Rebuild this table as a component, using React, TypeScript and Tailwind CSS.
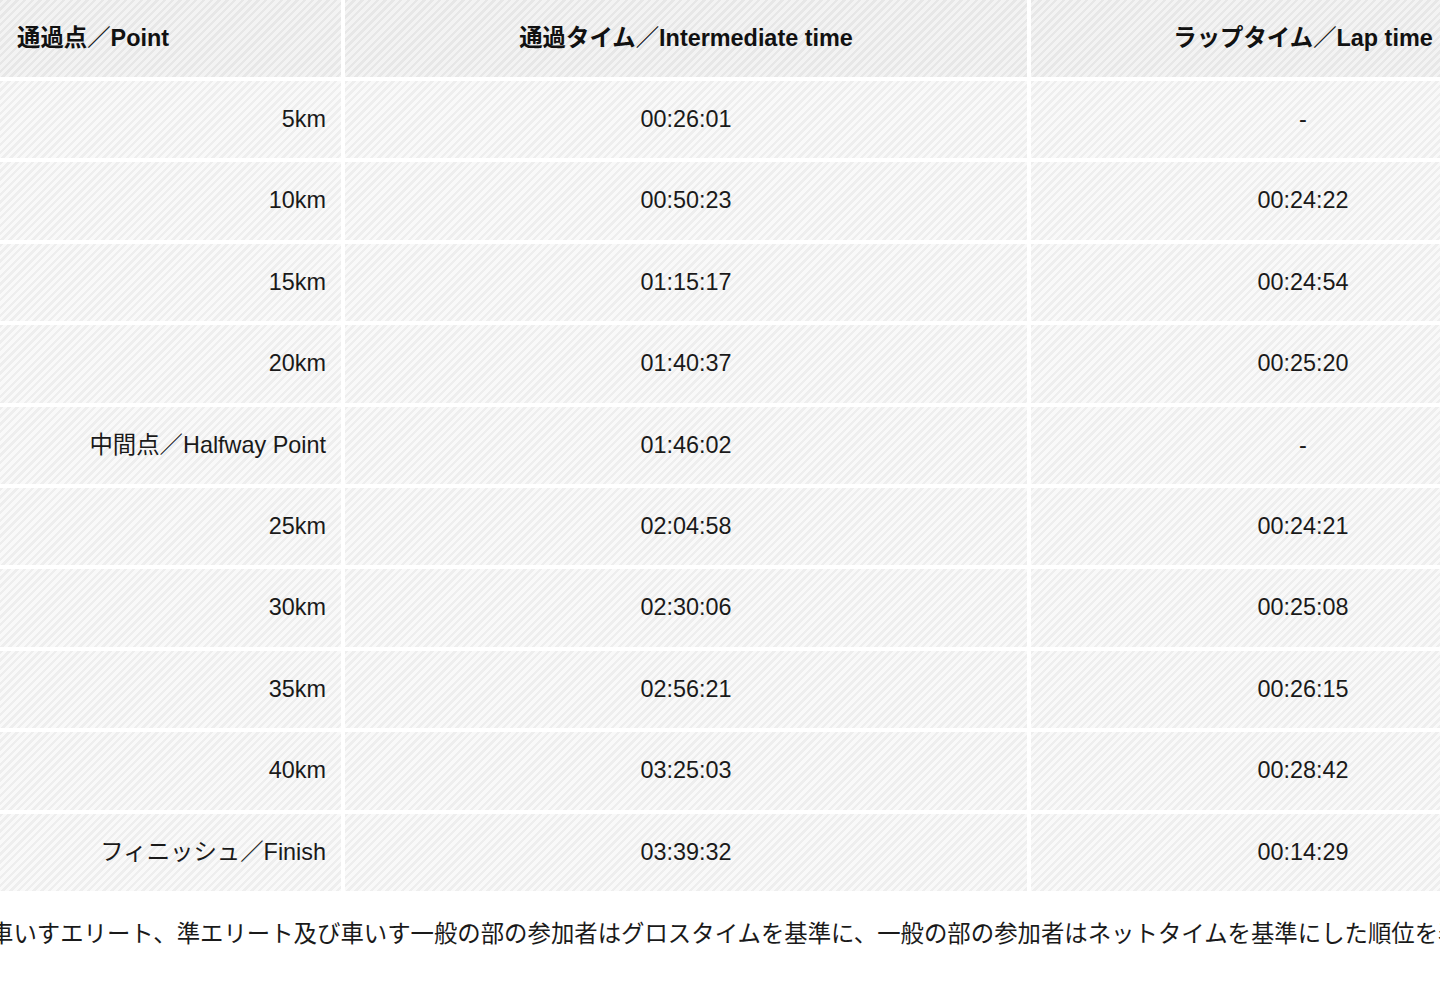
const rows = [
  { point: "5km", time: "00:26:01", lap: "-" },
  { point: "10km", time: "00:50:23", lap: "00:24:22" },
  { point: "15km", time: "01:15:17", lap: "00:24:54" },
  { point: "20km", time: "01:40:37", lap: "00:25:20" },
  { point: "中間点／Halfway Point", time: "01:46:02", lap: "-" },
  { point: "25km", time: "02:04:58", lap: "00:24:21" },
  { point: "30km", time: "02:30:06", lap: "00:25:08" },
  { point: "35km", time: "02:56:21", lap: "00:26:15" },
  { point: "40km", time: "03:25:03", lap: "00:28:42" },
  { point: "フィニッシュ／Finish", time: "03:39:32", lap: "00:14:29" },
];

const headCell =
  "h-[77px] flex items-center font-bold text-[#111] bg-[repeating-linear-gradient(135deg,#e7e7e7_0px,#e7e7e7_2.5px,#f3f3f3_2.5px,#f3f3f3_5.5px)]";
const bodyCell =
  "h-[77.4px] flex items-center text-[#1a1a1a] bg-[repeating-linear-gradient(135deg,#eeeeee_0px,#eeeeee_2.5px,#f9f9f9_2.5px,#f9f9f9_5.5px)]";

export default function App() {
  return (
    <div
      className="w-[1440px] h-[989px] overflow-hidden bg-white text-[23.4px] leading-none"
      style={{ fontFamily: '"Liberation Sans", "Noto Sans CJK JP", sans-serif' }}
    >
      {/* Split table */}
      <div className="grid grid-cols-[341px_682px_544px] gap-[4px] w-[1575px]">
        <div className={`${headCell} pl-[17px]`}>通過点／Point</div>
        <div className={`${headCell} justify-center`}>通過タイム／Intermediate time</div>
        <div className={`${headCell} justify-center`}>ラップタイム／Lap time</div>

        {rows.map((r) => (
          <div key={r.point} className="contents">
            <div className={`${bodyCell} justify-end pr-[15px]`}>{r.point}</div>
            <div className={`${bodyCell} justify-center`}>{r.time}</div>
            <div className={`${bodyCell} justify-center`}>{r.lap}</div>
          </div>
        ))}
      </div>

      {/* Note */}
      <div className="mt-[26px] ml-[-10px] whitespace-nowrap text-[#1a1a1a] leading-[35px]">
        車いすエリート、準エリート及び車いす一般の部の参加者はグロスタイムを基準に、一般の部の参加者はネットタイムを基準にした順位を表示しています。
      </div>
    </div>
  );
}
